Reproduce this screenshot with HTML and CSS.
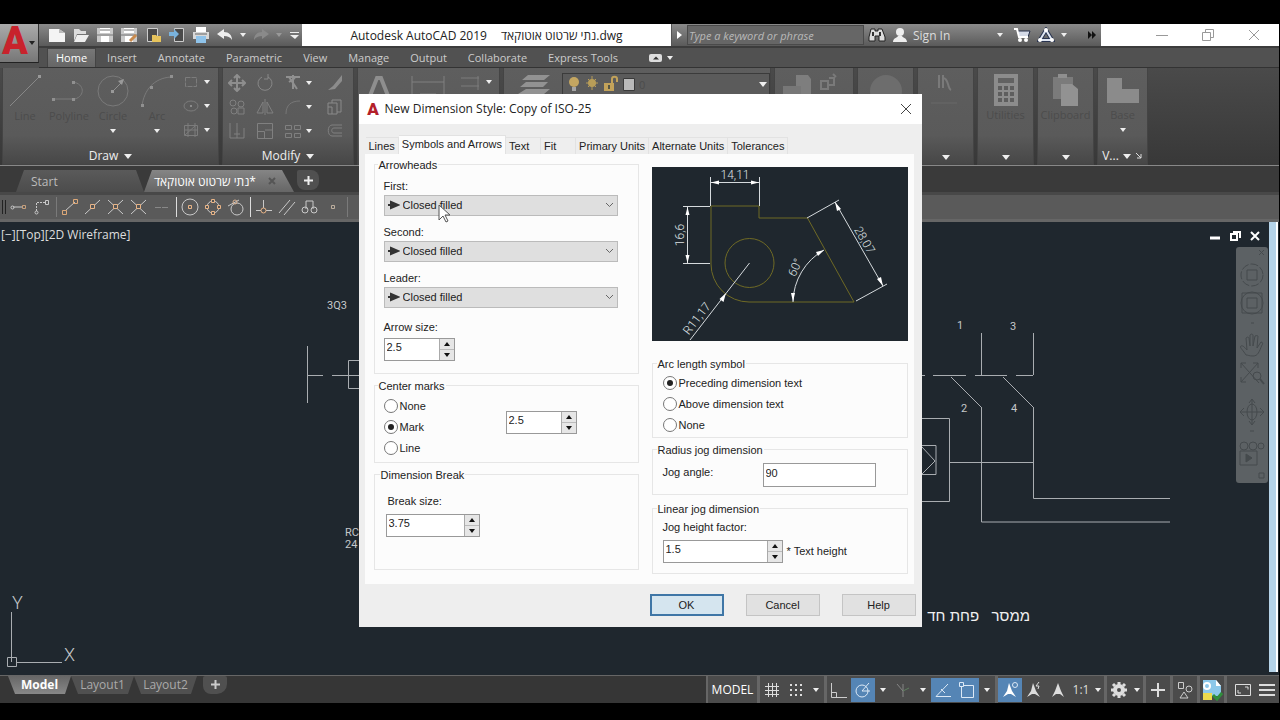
FILE: index.html
```html
<!DOCTYPE html>
<html lang="en">
<head>
  <meta charset="UTF-8">
  <meta name="viewport" content="width=device-width, initial-scale=1.0">
  <title>Autodesk AutoCAD 2019</title>
  <link rel="stylesheet" href="styles.css">
</head>
<body>
  <div class="app">
    <header class="header">
      <button class="app-btn" aria-label="Application menu">
        <svg width="28" height="36" viewBox="0 0 28 36"><text x="14" y="29" class="logo-a">A</text></svg>
        <i class="caret dark"></i>
      </button>

      <div class="titlebar">
        <div class="quick">
          <button aria-label="New"><svg width="18" height="16"><path d="M1 2h10l6 4v9H1z" fill="#f4f4f4"/><path d="M11 2v4h6z" fill="#bbb"/></svg></button>
          <button aria-label="Open"><svg width="18" height="16"><path d="M2 2h5l2 2h5v3H5L2 14z" fill="#ddd"/><path d="M5 8h12l-4 7H2z" fill="#eee"/></svg></button>
          <button aria-label="Save"><svg width="18" height="16"><path d="M1 1h16v14H1z" fill="#c9c9c9"/><path d="M4 1h10v5H4zM5 9h8v6H5z" fill="#fff"/><path d="M4 3h10M1 8h16" stroke="#777"/></svg></button>
          <button aria-label="Save As"><svg width="18" height="16"><path d="M1 1h16v14H1z" fill="#c9c9c9"/><path d="M4 1h10v5H4zM5 9h8v6H5z" fill="#fff"/><path d="M4 3h10M1 8h16" stroke="#777"/><path d="M10 14l6-6" stroke="#c98a4c" stroke-width="3"/></svg></button>
          <button aria-label="Open from Web"><svg width="18" height="16"><path d="M3.500 1.500h10v13h-10z" fill="#4a4a4a" stroke="#ccc"/><path d="M8 8h4l1 1h4v6H8z" fill="#e6c35c"/></svg></button>
          <button aria-label="Save to Web"><svg width="18" height="16"><path d="M6.500 1.500h9v13h-9z" fill="#4a4a4a" stroke="#ccc"/><path d="M1 5h5V2l5 5-5 5V9H1z" fill="#79b2dc"/></svg></button>
          <button aria-label="Plot"><svg width="18" height="16"><path d="M4 0h10v5H4z" fill="#fff"/><path d="M1 5h16v7H1z" fill="#d8d8d8"/><path d="M4 9h10v7H4z" fill="#8fc3ea"/><path d="M3 7h12" stroke="#666"/></svg></button>
          <button aria-label="Undo"><svg width="18" height="16"><path d="M1 7l7-5v3c5 0 8 3 8 8-2-3-4-4-8-4v3z" fill="#eee"/></svg></button>
          <i class="caret"></i>
          <button aria-label="Redo"><svg width="18" height="16"><path d="M17 7l-7-5v3c-5 0-8 3-8 8 2-3 4-4 8-4v3z" fill="#8a8a8a"/></svg></button>
          <i class="caret dim"></i>
          <button class="more" aria-label="Customize"><svg width="12" height="16"><path d="M2 5.500h9" stroke="#eee"/><path d="M2 8h9l-4 4z" fill="#eee"/></svg></button>
        </div>
        <div class="doc-title"><span>Autodesk AutoCAD 2019</span><span>נתי שרטוט אוטוקאד.dwg</span></div>
        <button class="search-toggle" aria-label="Toggle search"><svg width="8" height="10"><path d="M1 1l5 4-5 4z" fill="#fff"/></svg></button>
        <input class="search" type="text" aria-label="Search" placeholder="Type a keyword or phrase">
        <div class="account">
          <button aria-label="Find"><svg width="18" height="16"><path d="M3 2h4v2h3V2h4l3 8v4h-6V9H7v5H1v-4z" fill="#ddd" stroke="#222"/><path d="M5 5v4M12 5v4" stroke="#333" stroke-width="2"/></svg></button>
          <button class="sign"><svg width="16" height="16"><circle cx="8" cy="5" r="4" fill="#eee"/><path d="M1 15c0-4 4-4 5-6h4c1 2 5 2 5 6z" fill="#eee"/></svg>Sign In</button>
          <i class="caret push"></i>
          <button aria-label="App Store"><svg width="18" height="16"><path d="M1 2h3l2 8h9l2-6H5" fill="#d5dbe8" stroke="#27304a"/><path d="M1 2h3l2 8h9" fill="none" stroke="#fff" stroke-width="2"/><circle cx="7" cy="13" r="2" fill="#fff"/><circle cx="13" cy="13" r="2" fill="#fff"/></svg></button>
          <button aria-label="Autodesk 360"><svg width="18" height="16"><path d="M9 3l6 10H3z" fill="none" stroke="#28334f" stroke-width="4"/><path d="M9 3l6 10H3z" fill="none" stroke="#dfe6f2" stroke-width="2"/><circle cx="9" cy="3" r="2" fill="#fff"/><circle cx="3" cy="13" r="2" fill="#fff"/><circle cx="15" cy="13" r="2" fill="#fff"/></svg></button>
          <i class="caret"></i>
          <button class="ff" aria-label="More"><svg width="10" height="10"><path d="M1 1l4 4-4 4zM5 1l4 4-4 4z" fill="#111"/></svg></button>
        </div>
        <div class="win-btns">
          <button aria-label="Minimize"><svg width="12" height="12"><path d="M0 6.500h12" stroke="#999"/></svg></button>
          <button aria-label="Restore"><svg width="12" height="12" fill="none" stroke="#999"><path d="M.500 3.500h8v8h-8zM3.500 3V.500h8v8H9"/></svg></button>
          <button aria-label="Close"><svg width="12" height="12" stroke="#999"><path d="M1 1l10 10M11 1L1 11"/></svg></button>
        </div>
      </div>

      <nav class="menubar">
        <a href="#" class="active">Home</a>
        <a href="#">Insert</a>
        <a href="#">Annotate</a>
        <a href="#">Parametric</a>
        <a href="#">View</a>
        <a href="#">Manage</a>
        <a href="#">Output</a>
        <a href="#">Collaborate</a>
        <a href="#">Express Tools</a>
        <button class="ribbon-min" aria-label="Minimize ribbon"><svg width="14" height="8"><rect width="13" height="8" rx="2" fill="#ddd"/><path d="M4 5.500l3-3 3 3z" fill="#333"/></svg><i class="caret"></i></button>
      </nav>
    </header>

    <div class="ribbon">
      <section class="panel draw">
        <div class="tools">
          <button class="big"><svg width="34" height="34"><path d="M2 32L32 2" stroke="#888"/><path d="M30 1h3v3h-3z" fill="#999"/></svg>Line</button>
          <button class="big"><svg width="40" height="34"><path d="M4 25h22M24 8c12 2 12 14 2 17" fill="none" stroke="#7a7a7a"/><path d="M3 24h3v3H3zM23 24h3v3h-3zM23 7h3v3h-3z" fill="#909090"/></svg>Polyline</button>
          <button class="big"><svg width="34" height="34"><circle cx="17" cy="17" r="15" fill="none" stroke="#7a7a7a"/><path d="M17 17L27 7" stroke="#909090"/><path d="M28 5l-2 6-4-4zM15 16h3v3h-3z" fill="#999"/></svg>Circle<i class="caret"></i></button>
          <button class="big"><svg width="34" height="34"><path d="M2 32C4 16 14 4 31 3" fill="none" stroke="#7a7a7a"/><path d="M1 30h3v3H1zM10 12h3v3h-3zM30 1h3v3h-3z" fill="#909090"/></svg>Arc<i class="caret"></i></button>
          <div class="small-grid">
            <button aria-label="Rectangle"><svg width="16" height="16"><path d="M2.500 3.500h11v9h-11z" fill="none" stroke="#7c7c7c" stroke-dasharray="5 1"/></svg><i class="caret"></i></button>
            <button aria-label="Ellipse"><svg width="16" height="16"><ellipse cx="8" cy="8" rx="7" ry="5" fill="none" stroke="#7c7c7c"/><path d="M7 7h2v2H7z" fill="#8c8c8c"/></svg><i class="caret"></i></button>
            <button aria-label="Hatch"><svg width="16" height="16"><path d="M1.500 3.500h13v10h-13zM5 1v14M12 1v14M1 8h14M2 13L12 4" fill="none" stroke="#7c7c7c"/></svg><i class="caret"></i></button>
          </div>
        </div>
        <h2>Draw <i class="caret"></i></h2>
      </section>

      <section class="panel modify">
        <div class="tools mod-grid">
          <button aria-label="Move"><svg width="18" height="18"><path d="M9 1v16M1 9h16M6 4l3-3 3 3M6 14l3 3 3-3M4 6L1 9l3 3M14 6l3 3-3 3" fill="none" stroke="#8e8e8e" stroke-width="2"/></svg></button>
          <button aria-label="Rotate"><svg width="18" height="18"><path d="M12 3a7 7 0 1 1-6 0M12 0v5h-4" fill="none" stroke="#888"/></svg></button>
          <button aria-label="Trim"><svg width="18" height="18"><path d="M2 3h14M5 3l8 12M9 1v14M5 8l6-4" fill="none" stroke="#909090" stroke-width="2"/></svg><i class="caret"></i></button>
          <button aria-label="Erase"><svg width="18" height="18"><path d="M16 1L7 12l-5 4 7-1 7-8z" fill="#8c8c8c"/></svg></button>
          <button aria-label="Copy"><svg width="18" height="18" fill="none" stroke="#808080"><circle cx="5" cy="5" r="3"/><circle cx="13" cy="6" r="3"/><circle cx="6" cy="13" r="3"/><path d="M10 10h6v6h-6z"/></svg></button>
          <button aria-label="Mirror"><svg width="18" height="18" fill="none" stroke="#808080"><path d="M9 1v16M7 4v11H1zM11 4v11h6z"/></svg></button>
          <button aria-label="Fillet"><svg width="18" height="18"><path d="M2 16C2 7 7 3 16 3" fill="none" stroke="#777"/></svg><i class="caret"></i></button>
          <button aria-label="Explode"><svg width="18" height="18" fill="none" stroke="#8a8a8a"><path d="M2 5h9v11H2zM6 5V2h9v12h-4M2 9h4v7"/></svg></button>
          <button aria-label="Stretch"><svg width="18" height="18" fill="none" stroke="#808080"><path d="M2 1v15h14V6M9 1v15M6 12h6"/></svg></button>
          <button aria-label="Scale"><svg width="18" height="18" fill="none" stroke="#808080"><path d="M1.500 1.500h15v15h-15zM1.500 9.500h7v7M9 8h7"/></svg></button>
          <button aria-label="Array"><svg width="18" height="18" fill="none" stroke="#808080"><path d="M1.500 3.500h6v4h-6zM10.500 3.500h6v4h-6zM1.500 11.500h6v4h-6zM10.500 11.500h6v4h-6z"/></svg><i class="caret"></i></button>
          <button aria-label="Offset"><svg width="18" height="18" fill="none" stroke="#808080"><path d="M16 3H6C1 3 1 14 6 14h10M16 6H8c-3 0-3 5 0 5h8"/></svg></button>
        </div>
        <h2>Modify <i class="caret"></i></h2>
      </section>

      <section class="panel annotation">
        <div class="tools">
          <svg width="34" height="34"><path d="M4 32L15 4h4l11 28M9 22h16" fill="none" stroke="#8e8e8e" stroke-width="4"/></svg>
          <svg width="36" height="34"><path d="M2 2v30M34 2v30M2 8h32M10 20h16M18 20v14" fill="none" stroke="#808080"/></svg>
          <svg width="20" height="34"><path d="M1 4h18M1 12h18M18 2v14" fill="none" stroke="#7c7c7c"/></svg>
          <i class="caret"></i>
        </div>
      </section>

      <section class="panel layers">
        <svg width="34" height="34"><path d="M10 2h22l-6 5H4zM8 9h22l-5 5H2zM8 16h24l-6 5H0z" fill="#929292"/></svg>
        <button class="layer-combo" aria-label="Layer">
          <svg width="14" height="18"><circle cx="7" cy="7" r="5" fill="#c4a661"/><path d="M5 12h4v4H5z" fill="#a5a5a5"/></svg>
          <svg width="14" height="18"><circle cx="7" cy="8" r="4" fill="#b89d58"/><path d="M7 1v14M1 8h12M3 4l8 8M11 4l-8 8" stroke="#b89d58"/></svg>
          <svg width="16" height="18"><path d="M1 8h10v8H1z" fill="#c2a25a"/><path d="M9 8V4c0-3 5-3 5 0v3" fill="none" stroke="#c2a25a" stroke-width="2"/><path d="M6 10v4" stroke="#554" stroke-width="2"/></svg>
          <svg width="12" height="18"><path d="M.500 3.500h11v12h-11z" fill="#b9b9b9" stroke="#3a3a3a"/></svg>
          <span>0</span>
          <i class="caret"></i>
        </button>
      </section>

      <section class="panel block">
        <svg width="28" height="34"><path d="M13 2h12l3 4v16H13z" fill="#7e7e7e"/><path d="M0 13h18v12H0z" fill="#777"/></svg>
        <svg width="18" height="20"><path d="M2 8h7v8H2zM10 5h5v7h-5M14 1l3 3" fill="none" stroke="#7a7a7a" stroke-width="2"/></svg>
      </section>

      <section class="panel slim"><svg width="34" height="34"><circle cx="17" cy="18" r="16" fill="#6d6d6d"/></svg></section>
      <section class="panel slim">
        <svg width="34" height="34"><path d="M10 2v13M14 2v13M14 5c6 0 4 10 8 12" fill="none" stroke="#7a7a7a" stroke-width="2"/><path d="M2 30h26" stroke="#686868"/></svg>
        <i class="caret foot"></i>
      </section>
      <section class="panel slim">
        <svg width="34" height="34"><path d="M5 1h24v32H5z" fill="#8c8c8c"/><path d="M9 5h16v5H9z" fill="#626262"/><path d="M9 15h16M9 21h16M9 27h16" stroke="#5e5e5e" stroke-width="4" stroke-dasharray="4 2"/></svg>
        <span>Utilities</span>
        <i class="caret foot"></i>
      </section>
      <section class="panel slim">
        <svg width="34" height="34"><path d="M4 4h20v22H4z" fill="#7b7b7b"/><path d="M9 1h9v4H9z" fill="#8f8f8f"/><path d="M12 11h11l6 5v17H12z" fill="#929292"/></svg>
        <span>Clipboard</span>
        <i class="caret foot"></i>
      </section>
      <section class="panel slim view">
        <svg width="34" height="34"><path d="M1 5h15v11h17v14H1z" fill="#8b8b8b"/></svg>
        <span>Base</span>
        <i class="caret"></i>
        <h2>V... <i class="caret"></i><svg width="8" height="8"><path d="M1 1l5 5M6 2v4H2" fill="none" stroke="#ddd"/></svg></h2>
      </section>
    </div>

    <div class="file-tabs">
      <button class="file-tab">Start</button>
      <button class="file-tab current"><span dir="rtl">*נתי שרטוט אוטוקאד</span><svg width="8" height="8"><path d="M1 1l6 6M7 1L1 7" stroke="#555" stroke-width="2"/></svg></button>
      <button class="file-add" aria-label="New tab"><svg width="9" height="9"><path d="M4.500 0v9M0 4.500h9" stroke="#eee" stroke-width="2"/></svg></button>
    </div>

    <div class="snapbar">
      <i class="grip"></i>
      <button aria-label="Temporary track point"><svg width="20" height="20" fill="none" stroke="#c9c9c9"><path d="M4 10h9"/><circle cx="3.500" cy="10.500" r="1.500"/><path d="M13.500 8.500h3v3h-3z" stroke="#c7a07c"/></svg></button>
      <button aria-label="Snap from"><svg width="20" height="20" fill="none" stroke="#c9c9c9"><path d="M4.500 14V5.500h9" stroke-dasharray="2 1"/><circle cx="4.500" cy="15.500" r="1.500"/><path d="M13.500 3.500h3v4h-3z"/></svg></button>
      <i class="sep faint"></i>
      <button aria-label="Endpoint"><svg width="20" height="20" fill="none" stroke="#c9c9c9"><path d="M5 14L15 5"/><path d="M2.500 13.500h4v4h-4zM13.500 2.500h4v4h-4z" stroke="#dda878"/></svg></button>
      <button aria-label="Midpoint"><svg width="20" height="20" fill="none" stroke="#c9c9c9"><path d="M2 17L17 3"/><path d="M7.500 7.500h4v4h-4z" stroke="#e8b487" fill="#555"/></svg></button>
      <button aria-label="Intersection"><svg width="20" height="20" fill="none" stroke="#c9c9c9"><path d="M2 17L17 3M2 3l15 14"/><path d="M7.500 7.500h4v4h-4z" stroke="#e8b487" fill="#555"/></svg></button>
      <button aria-label="Apparent intersection"><svg width="20" height="20" fill="none" stroke="#c9c9c9"><path d="M2 17L17 3M2 3l15 14"/><path d="M7.500 7.500h4v4h-4z" stroke="#e8b487" fill="#555"/></svg></button>
      <button aria-label="Extension"><svg width="20" height="20"><path d="M3 10.500h14" stroke="#888" stroke-dasharray="6 1"/></svg></button>
      <i class="sep"></i>
      <button aria-label="Center"><svg width="20" height="20" fill="none" stroke="#c9c9c9"><circle cx="10" cy="10" r="8"/><path d="M8.500 8.500h3v3h-3z" stroke="#e8b487"/></svg></button>
      <button aria-label="Quadrant"><svg width="20" height="20" fill="none" stroke="#c9c9c9"><circle cx="10" cy="10" r="6"/><path d="M8.500 2.500h3v3h-3zM8.500 14.500h3v3h-3zM2.500 8.500h3v3h-3zM14.500 8.500h3v3h-3z" stroke="#e8b487" fill="#555"/></svg></button>
      <button aria-label="Tangent"><svg width="20" height="20" fill="none" stroke="#c9c9c9"><circle cx="11" cy="12" r="6"/><path d="M2 9l11-6"/><circle cx="9" cy="5" r="2" stroke="#d8b090"/></svg></button>
      <i class="sep"></i>
      <button aria-label="Perpendicular"><svg width="20" height="20" fill="none" stroke="#c9c9c9"><path d="M2 13.500h16M9.500 3v8"/><circle cx="9.500" cy="13.500" r="2.500" stroke="#e8b487" fill="#555"/></svg></button>
      <button aria-label="Parallel"><svg width="20" height="20" fill="none" stroke="#c9c9c9"><path d="M2 16L13 3M7 18L18 5"/></svg></button>
      <button aria-label="Insert snap"><svg width="20" height="20" fill="none" stroke="#c9c9c9"><path d="M6 12V4h7v8"/><circle cx="5" cy="13" r="3"/><circle cx="14" cy="13" r="3"/></svg></button>
      <button aria-label="Node"><svg width="20" height="20" fill="none"><path d="M8.500 8.500h3v3h-3z" stroke="#bcae9e"/></svg></button>
      <i class="sep faint"></i>
    </div>

    <main class="canvas">
      <svg class="drawing" width="100%" height="100%">
        <!-- left side of the circuit -->
        <text x="327" y="87">3Q3</text>
        <path d="M307.500 124v57M307 153.500h16M332 153.500h40M372 138.500h-23.500v28H372"/>
        <text x="345" y="314">RC</text>
        <text x="345" y="326">24</text>
        <!-- contacts and relay on the right -->
        <text x="957" y="107">1</text>
        <text x="1010" y="108">3</text>
        <text x="961" y="190">2</text>
        <text x="1011" y="190">4</text>
        <path d="M981.500 111v42M1033.500 111v42M920 153.500h5M933 153.500h33M975 153.500h32M1016 153.500h17M951 155l30 30M1003 155l30 30"/>
        <path d="M981.500 185v115H1170M1033.500 185v91.500H1170M900 196.500h49.500v83H900M950 240.500h83M900 223.500h36v29h-36M922 225l13 14-13 13"/>
        <text class="heb" x="1030" y="399" direction="rtl" xml:space="preserve">ממסר   פחת חד</text>
        <!-- UCS icon -->
        <path d="M11.500 390v50M17 440.500h45M7.500 435.500h9v9h-9z" stroke="#e0e0e0"/>
        <text class="axis" x="12" y="387">Y</text>
        <text class="axis" x="64" y="439">X</text>
      </svg>
      <div class="viewport-label">[−][Top][2D Wireframe]</div>
      <div class="view-btns">
        <button aria-label="Minimize view"><svg width="12" height="12"><path d="M1 8h10" stroke="#fff" stroke-width="3"/></svg></button>
        <button aria-label="Restore view"><svg width="12" height="12" fill="none" stroke="#fff" stroke-width="2"><path d="M2 4h6v6H2zM4 2h7v6"/></svg></button>
        <button aria-label="Close view"><svg width="12" height="12"><path d="M2 2l8 8M10 2l-8 8" stroke="#fff" stroke-width="2"/></svg></button>
      </div>
      <div class="navbar">
        <svg width="32" height="236" fill="none" stroke="#454a4d">
          <path d="M23 3l5 5M28 3l-5 5"/>
          <circle cx="16" cy="28" r="11" stroke-dasharray="8 2"/><path d="M11 23h10v10H11z"/>
          <path d="M6 46h20v20H6zM11 51h10v10H11z"/><circle cx="16" cy="56" r="11"/>
          <path d="M15 76h3"/>
          <path d="M10 108c-3-5-7-8-5-9s4 2 6 4l-1-12c2-2 3 0 3 0l1 8V88c2-2 3 0 3 0v11l2-10c2-1 3 0 3 0l-1 12 4-6c2 0 2 2 1 3-3 7-4 11-9 11-4 0-5-1-7-1z"/>
          <path d="M5 116l18 20M22 116L5 135M5 121v-5h5M17 116h5v5M5 130v5h5"/><circle cx="21" cy="129" r="4"/><path d="M24 132l4 5" stroke-width="2"/>
          <path d="M16 153v24M4 165h24M8 161l-4 4 4 4M24 161l4 4-4 4M13 156l3-4 3 4M13 174l3 4 3-4"/><ellipse cx="16" cy="165" rx="5" ry="8"/>
          <path d="M14 184h4"/>
          <circle cx="8" cy="199" r="4"/><circle cx="17" cy="199" r="4"/><circle cx="25" cy="199" r="3"/><path d="M4 204h17v14H4z"/><path d="M10 207l6 4-6 4z" fill="#454a4d"/>
          <path d="M23 226h5v5h-5z"/>
        </svg>
      </div>
      <div class="scroll-strip"></div>
    </main>

    <footer class="footer">
      <div class="layout-tabs">
        <button class="layout-tab active">Model</button>
        <button class="layout-tab">Layout1</button>
        <button class="layout-tab">Layout2</button>
        <button class="layout-tab add" aria-label="New layout"><svg width="9" height="9"><path d="M4.500 0v9M0 4.500h9" stroke="#ccc" stroke-width="2"/></svg></button>
      </div>
      <div class="status">
        <div class="grp"><button class="model">MODEL</button></div>
        <div class="grp">
          <button aria-label="Grid"><svg width="18" height="18" stroke="#ddd"><path d="M5.500 2v14M9.500 2v14M13.500 2v14M2 5.500h14M2 9.500h14M2 13.500h14"/></svg></button>
          <button aria-label="Snap"><svg width="18" height="18"><path d="M3 4h12M3 9h12M3 14h12" stroke="#ddd" stroke-width="2" stroke-dasharray="2 3"/></svg></button>
          <i class="caret"></i>
        </div>
        <div class="grp">
          <button aria-label="Ortho"><svg width="18" height="18" fill="none" stroke="#ccc"><path d="M1.500 2v14.500H17M1.500 11.500h5v5"/></svg></button>
          <button class="on" aria-label="Polar"><svg width="18" height="18" fill="none" stroke="#dce9f6"><circle cx="8" cy="10" r="6"/><path d="M8 10l7-8M8 10h8"/></svg></button>
          <i class="caret"></i>
          <button aria-label="Isometric"><svg width="18" height="18" fill="none" stroke="#858585"><path d="M9 3v13M3 3l6 7" /><path d="M9 10l6-3" stroke="#5f7f5f"/></svg></button>
          <i class="caret"></i>
          <button class="on" aria-label="Object snap tracking"><svg width="18" height="18" fill="none" stroke="#dce9f6"><path d="M14 3L2 15.500h15M7 8l4 4"/></svg></button>
          <button class="on" aria-label="Object snap"><svg width="18" height="18" fill="none" stroke="#dce9f6"><path d="M3.500 6v10.500h12v-12H6"/><path d="M1.500 1.500h4v4h-4z"/></svg></button>
          <i class="caret"></i>
        </div>
        <div class="grp">
          <button class="on" aria-label="Annotation visibility"><svg width="18" height="18"><path d="M8 2l3 8 4 6-5-3H7l-5 3 4-6z" fill="#fff"/><circle cx="14" cy="4" r="2.500" fill="none" stroke="#dce9f6"/></svg></button>
          <button aria-label="Auto scale"><svg width="18" height="18"><path d="M8 2l3 8 4 6-5-3H7l-5 3 4-6z" fill="#ddd"/><path d="M14 1l-3 4h3l-1 3" fill="none" stroke="#ddd"/></svg></button>
          <button aria-label="Annotation scale icon"><svg width="18" height="18"><path d="M9 2l3 8 3 6-4-3H7l-4 3 3-6z" fill="#ddd"/></svg></button>
          <button class="scale">1:1 <i class="caret"></i></button>
        </div>
        <div class="grp tight">
          <button aria-label="Workspace"><svg width="18" height="18"><circle cx="9" cy="9" r="4" fill="none" stroke="#ddd" stroke-width="4"/><path d="M9 1v3M9 14v3M1 9h3M14 9h3M3 3l2 2M13 13l2 2M15 3l-2 2M3 15l2-2" stroke="#ddd" stroke-width="3"/></svg></button>
          <i class="caret"></i>
        </div>
        <div class="grp"><button aria-label="Annotation monitor"><svg width="18" height="18"><path d="M9 2v14M2 9h14" stroke="#ddd" stroke-width="2"/></svg></button></div>
        <div class="grp"><button aria-label="Isolate objects"><svg width="18" height="18" fill="none" stroke="#ccc"><path d="M2.500 1.500h5v6h-5zM8 11l4 6H4z"/><circle cx="13" cy="8" r="3"/></svg></button></div>
        <div class="grp"><button aria-label="Graphics performance"><svg width="22" height="22"><path d="M2 1h13l5 6v10H2z" fill="#8cc8ea"/><path d="M15 1v6h5z" fill="#fff"/><path d="M2 14h9v7H2z" fill="#ecd94c"/><circle cx="6" cy="7" r="3" fill="none" stroke="#fff" stroke-width="2"/><path d="M12 16l4 4 5-6" fill="none" stroke="#2f8f3c" stroke-width="3"/></svg></button></div>
        <div class="grp last">
          <button aria-label="Clean screen"><svg width="18" height="18" fill="none" stroke="#ddd"><path d="M1.500 3.500h15v11h-15zM4 9v3h3M14 8.500V6h-3"/></svg></button>
          <button aria-label="Customization"><svg width="18" height="18"><path d="M1 4h16M1 9h16M1 14h16" stroke="#ddd" stroke-width="2"/></svg></button>
        </div>
      </div>
    </footer>
  </div>

  <div class="overlay">
    <form class="dialog" role="dialog" aria-labelledby="dlg-title">
      <div class="dlg-title">
        <svg width="16" height="20" viewBox="0 0 16 20"><text x="7" y="16" class="logo-small">A</text></svg>
        <h1 id="dlg-title">New Dimension Style: Copy of ISO-25</h1>
        <button type="button" aria-label="Close dialog"><svg width="12" height="12"><path d="M1 1l10 10M11 1L1 11" stroke="#444"/></svg></button>
      </div>
      <div class="dlg-tabs" role="tablist">
        <button type="button" role="tab">Lines</button>
        <button type="button" role="tab" class="selected">Symbols and Arrows</button>
        <button type="button" role="tab">Text</button>
        <button type="button" role="tab">Fit</button>
        <button type="button" role="tab">Primary Units</button>
        <button type="button" role="tab">Alternate Units</button>
        <button type="button" role="tab">Tolerances</button>
      </div>

      <div class="page">
        <div class="col">
          <fieldset class="arrowheads">
            <legend>Arrowheads</legend>
            <div class="field">
              <label for="first">First:</label>
              <div class="combo">
                <select id="first"><option>Closed filled</option></select>
                <svg class="arrow" width="12" height="10"><path d="M0 5h2M3 2l7 3-7 3z" fill="#333" stroke="#333" stroke-width="2"/></svg>
                <svg class="chev" width="9" height="6"><path d="M1 1l3.500 3.500L8 1" fill="none" stroke="#666"/></svg>
                <svg class="cursor" width="13" height="20"><path d="M1 1v15l4-4 3 6 2-1-3-6h5z" fill="#fff" stroke="#555"/></svg>
              </div>
            </div>
            <div class="field">
              <label for="second">Second:</label>
              <div class="combo">
                <select id="second"><option>Closed filled</option></select>
                <svg class="arrow" width="12" height="10"><path d="M0 5h2M3 2l7 3-7 3z" fill="#333" stroke="#333" stroke-width="2"/></svg>
                <svg class="chev" width="9" height="6"><path d="M1 1l3.500 3.500L8 1" fill="none" stroke="#666"/></svg>
              </div>
            </div>
            <div class="field">
              <label for="leader">Leader:</label>
              <div class="combo">
                <select id="leader"><option>Closed filled</option></select>
                <svg class="arrow" width="12" height="10"><path d="M0 5h2M3 2l7 3-7 3z" fill="#333" stroke="#333" stroke-width="2"/></svg>
                <svg class="chev" width="9" height="6"><path d="M1 1l3.500 3.500L8 1" fill="none" stroke="#666"/></svg>
              </div>
            </div>
            <div class="field numeric">
              <label for="arrow-size">Arrow size:</label>
              <div class="spin short">
                <input type="text" id="arrow-size" value="2.5">
                <div class="steps"><button type="button" class="up" aria-label="Increase"></button><button type="button" class="down" aria-label="Decrease"></button></div>
              </div>
            </div>
          </fieldset>

          <fieldset class="center-marks">
            <legend>Center marks</legend>
            <div class="radios">
              <label><input type="radio" name="center">None</label>
              <label><input type="radio" name="center" checked>Mark</label>
              <label><input type="radio" name="center">Line</label>
            </div>
            <div class="spin short">
              <input type="text" aria-label="Center mark size" value="2.5">
              <div class="steps"><button type="button" class="up" aria-label="Increase"></button><button type="button" class="down" aria-label="Decrease"></button></div>
            </div>
          </fieldset>

          <fieldset class="break">
            <legend>Dimension Break</legend>
            <div class="field numeric">
              <label for="break-size">Break size:</label>
              <div class="spin mid">
                <input type="text" id="break-size" value="3.75">
                <div class="steps"><button type="button" class="up" aria-label="Increase"></button><button type="button" class="down" aria-label="Decrease"></button></div>
              </div>
            </div>
          </fieldset>
        </div>

        <div class="col right">
          <svg class="preview" viewBox="0 0 256 174">
            <g fill="none" stroke="#6f6a25">
              <path d="M59 39h48v12h48.500L202 135H97A38 38 0 0 1 59 97z"/>
              <circle cx="97.500" cy="96" r="24.500"/>
            </g>
            <g fill="none" stroke="#d5dadd">
              <path d="M58.500 10v29M107.500 10v29M59 15.500h48M31 39.500h27M31 96.500h27M35.500 39v57"/>
              <path d="M97.500 96L38 173M155 51l32-18M204 134l31-17M183 35l48 84M141 135A61 61 0 0 1 172 83"/>
            </g>
            <g fill="#fff">
              <path d="M59 15.500l8-2v4zM107 15.500l-8-2v4zM35.500 40l-2 8h4zM35.500 96l-2-8h4z"/>
              <path d="M74 126l-2.500 9-4-3zM183 35l6 7-4 2zM231 119l-6-7 4-2zM141 135l-2-9h4zM172 83l-8 2 2 4z"/>
            </g>
            <g class="dims">
              <text x="83" y="12">14,11</text>
              <text transform="translate(32 68) rotate(-90)">16,6</text>
              <text transform="translate(48 154) rotate(-52)">R11,17</text>
              <text transform="translate(147 102) rotate(-66)">60°</text>
              <text transform="translate(209 75) rotate(60)">28,07</text>
            </g>
          </svg>

          <fieldset class="arc">
            <legend>Arc length symbol</legend>
            <div class="radios">
              <label><input type="radio" name="arc" checked>Preceding dimension text</label>
              <label><input type="radio" name="arc">Above dimension text</label>
              <label><input type="radio" name="arc">None</label>
            </div>
          </fieldset>

          <fieldset class="radius">
            <legend>Radius jog dimension</legend>
            <label for="jog-angle">Jog angle:</label>
            <input type="text" id="jog-angle" value="90">
          </fieldset>

          <fieldset class="linear">
            <legend>Linear jog dimension</legend>
            <label for="jog-height">Jog height factor:</label>
            <div class="spin-row">
              <div class="spin long">
                <input type="text" id="jog-height" value="1.5">
                <div class="steps"><button type="button" class="up" aria-label="Increase"></button><button type="button" class="down" aria-label="Decrease"></button></div>
              </div>
              <span>* Text height</span>
            </div>
          </fieldset>
        </div>
      </div>

      <div class="dlg-footer">
        <button type="button" class="btn primary">OK</button>
        <button type="button" class="btn">Cancel</button>
        <button type="button" class="btn">Help</button>
      </div>
    </form>
  </div>
</body>
</html>
```
FILE: styles.css
```css
* {
  box-sizing: border-box;
}
body {
  margin: 0;
  background-color: #000;
  font-family: "Open Sans", "Noto Sans", "Liberation Sans", sans-serif;
  font-size: 12px;
  color: #ddd;
}
button {
  font: inherit;
  color: inherit;
  background: none;
  border: none;
  padding: 0;
}
svg {
  flex: none;
}
h1, h2 {
  margin: 0;
  font-size: 12px;
  font-weight: normal;
}
.app {
  display: flex;
  flex-direction: column;
  min-height: 100vh;
  padding: 24px 1px 17px 0;
}
.caret {
  flex: none;
  width: 0;
  height: 0;
  border: 3px solid transparent;
  border-top: 4px solid #eee;
  border-bottom: none;
}
.caret.dark {
  border-top-color: #222;
}
.caret.dim {
  border-top-color: #999;
}

/* title bar and menu */
.header {
  display: grid;
  grid-template-columns: 39px 1fr;
  grid-template-rows: 24px 20px;
  background-color: #515151;
}
.app-btn {
  grid-row: 1 / 3;
  height: 39px;
  display: flex;
  align-items: center;
  padding-left: 1px;
  background: linear-gradient(#aaa, #777);
  border-right: 1px solid #333;
  border-bottom: 1px solid #222;
}
.logo-a {
  font: 900 38px/38px Roboto, sans-serif;
  fill: #c8232c;
  text-anchor: middle;
}
.app-btn svg,
.dlg-title svg {
  overflow: visible;
}
.titlebar {
  display: flex;
  background: linear-gradient(#8a8a8a, #5a5a5a);
  border-bottom: 2px solid #3c3c3c;
}
.titlebar button {
  display: flex;
  align-items: center;
  justify-content: center;
}
.quick {
  display: flex;
  align-items: center;
  gap: 6px;
  width: 263px;
  padding-left: 9px;
}
.quick .more {
  margin-left: auto;
  margin-right: 4px;
}
.doc-title {
  flex: 1;
  display: flex;
  align-items: center;
  justify-content: center;
  gap: 14px;
  background-color: #fff;
  color: #222;
  white-space: nowrap;
}
.search-toggle {
  width: 16px;
  border-left: 1px solid #555;
}
.search {
  width: 177px;
  margin: 1px 0;
  padding: 0 1px;
  border: 1px solid #4a4a4a;
  background-color: #666;
  font: italic 11px "Open Sans", sans-serif;
  color: #ddd;
}
.search::placeholder {
  color: #b9b9b9;
}
.account {
  display: flex;
  align-items: center;
  gap: 6px;
  width: 237px;
  padding: 0 0 0 4px;
}
.account .sign {
  gap: 5px;
}
.account .push {
  margin-left: auto;
  margin-right: 4px;
}
.account .ff {
  width: 18px;
  margin-left: 10px;
}
.win-btns {
  display: flex;
  width: 178px;
  padding-left: 38px;
  background-color: #fff;
}
.win-btns button {
  width: 46px;
}
.menubar {
  display: flex;
  align-items: center;
  gap: 1px;
  padding-left: 8px;
  border-bottom: 1px solid #333;
  font-size: 11px;
}
.menubar a {
  padding: 0 10px;
  line-height: 18px;
  color: #ccc;
  text-decoration: none;
  white-space: nowrap;
}
.menubar a.active {
  padding: 0 8px;
  background: linear-gradient(#777, #666);
  border: 1px solid #444;
  border-bottom: none;
  color: #fff;
}
.ribbon-min {
  display: flex;
  align-items: center;
  gap: 4px;
  margin-left: 20px;
}

/* ribbon */
.ribbon {
  display: flex;
  gap: 3px;
  height: 98px;
  padding: 0 2px;
  background: linear-gradient(#4a4a4a, #383838);
  border-bottom: 1px solid #888;
}
.panel {
  display: flex;
  flex: none;
  flex-direction: column;
  background: linear-gradient(#5e5e5e, #5a5a5a 70%, #474747);
  border: 1px solid #444;
  border-top: none;
  color: #4c4c4c;
  font-size: 11px;
}
.panel h2 {
  display: flex;
  align-items: center;
  justify-content: center;
  gap: 6px;
  margin-top: auto;
  line-height: 16px;
  color: #eee;
}
.panel h2 .caret {
  border-width: 5px 4px 0;
}
.tools {
  display: flex;
  padding-top: 6px;
}
.draw {
  width: 217px;
}
.modify {
  width: 132px;
}
.big {
  display: flex;
  flex-direction: column;
  align-items: center;
  width: 44px;
  height: 74px;
  line-height: 16px;
}
.big .caret {
  margin-top: 5px;
}
.small-grid {
  display: flex;
  flex-direction: column;
  gap: 8px;
  margin-left: 4px;
}
.small-grid button {
  display: flex;
  align-items: center;
  gap: 5px;
}
.mod-grid {
  display: grid;
  grid-template-columns: 28px 28px 42px 20px;
  gap: 6px 0;
  padding-left: 5px;
}
.mod-grid button {
  display: flex;
  align-items: center;
  gap: 4px;
}
.annotation {
  width: 143px;
}
.annotation .tools {
  gap: 14px;
  padding-left: 4px;
}
.annotation .caret {
  margin-top: 6px;
  margin-left: -8px;
}
.layers {
  flex-direction: row;
  gap: 10px;
  width: 268px;
  padding: 5px 0 0 14px;
}
.layer-combo {
  display: flex;
  flex: 1;
  align-items: center;
  gap: 4px;
  height: 22px;
  padding: 0 2px 0 4px;
  border: 1px solid #3b3b3b;
  background-color: #5b5b5b;
}
.layer-combo .caret {
  margin-left: auto;
  border-width: 5px 4px 0;
}
.block {
  flex-direction: row;
  gap: 8px;
  width: 80px;
  padding: 5px 8px;
}
.slim {
  align-items: center;
  width: 57px;
  padding-top: 5px;
}
.slim span {
  line-height: 16px;
}
.slim .foot {
  margin-top: auto;
  margin-bottom: 4px;
  border-width: 5px 4px 0;
}
.view {
  width: 51px;
}
.view > .caret {
  margin-top: 5px;
}
.view h2 {
  gap: 4px;
}

/* drawing tabs */
.file-tabs {
  display: flex;
  align-items: end;
  height: 26px;
  padding-left: 16px;
  background-color: #3a3a3a;
}
.file-tab {
  width: 128px;
  height: 22px;
  padding-left: 15px;
  text-align: left;
  background: linear-gradient(#5a5a5a, #4c4c4c);
  border-radius: 8px 8px 0 0;
  clip-path: polygon(8px 0, 120px 0, 100% 100%, 0 100%);
  color: #bbb;
}
.file-tab.current {
  display: flex;
  align-items: center;
  gap: 12px;
  width: 150px;
  padding-left: 10px;
  background: linear-gradient(#858585, #666);
  clip-path: polygon(8px 0, 138px 0, 100% 100%, 0 100%);
  color: #fff;
  white-space: nowrap;
}
.file-add {
  display: flex;
  align-items: center;
  justify-content: center;
  width: 22px;
  height: 20px;
  margin: 0 0 2px 3px;
  background-color: #505050;
  border-radius: 2px 8px 8px 8px;
}

/* object snap toolbar */
.snapbar {
  display: flex;
  align-items: center;
  gap: 3px;
  height: 30px;
  background-color: #5a5a5a;
  border-top: 3px solid #484848;
  border-bottom: 3px solid #666;
}
.snapbar button {
  display: flex;
}
.grip {
  width: 4px;
  height: 14px;
  margin-left: 2px;
  border: solid #222;
  border-width: 0 1px;
}
.sep {
  width: 1px;
  height: 20px;
  margin-left: 1px;
  background-color: #ddd;
}
.sep.faint {
  background-color: #7a7a7a;
}

/* model space */
.canvas {
  position: relative;
  flex: 1;
  min-height: 300px;
  background-color: #1f272e;
}
.drawing {
  position: absolute;
  inset: 0;
}
.drawing path {
  fill: none;
  stroke: #a9adb1;
}
.drawing text {
  font: 11px Roboto, sans-serif;
  fill: #c5c8ca;
}
.drawing .heb {
  font: 15px "Liberation Sans", sans-serif;
  fill: #f0f0f0;
}
.drawing .axis {
  font: 300 18px Roboto, sans-serif;
}
.viewport-label {
  position: absolute;
  top: 4px;
  left: 1px;
  line-height: 18px;
}
.view-btns {
  position: absolute;
  top: 7px;
  right: 18px;
  display: flex;
  gap: 8px;
}
.navbar {
  position: absolute;
  top: 25px;
  right: 11px;
  width: 32px;
  height: 236px;
  background-color: #5c6164;
  border-radius: 3px;
}
.scroll-strip {
  position: absolute;
  top: 0;
  right: 1px;
  bottom: 3px;
  width: 9px;
  background-color: #b5d3e8;
  border-right: 2px solid #fff;
}

/* layout tabs and status bar */
.footer {
  display: flex;
  height: 28px;
  background-color: #363636;
  border-top: 1px solid #666;
}
.layout-tabs {
  display: flex;
  flex: 1;
  padding-left: 8px;
}
.layout-tab {
  width: 63px;
  height: 18px;
  line-height: 18px;
  background-color: #505050;
  clip-path: polygon(0 0, 100% 0, 57px 100%, 7px 100%);
  color: #aaa;
}
.layout-tab.active {
  background: linear-gradient(#666, #888);
  color: #fff;
  font-weight: bold;
}
.layout-tab.add {
  width: 24px;
  margin-left: 6px;
  clip-path: none;
  border-radius: 2px 2px 10px 8px;
}
.status {
  display: flex;
  background-color: #4b4b4b;
  border-left: 2px solid #666;
}
.grp {
  display: flex;
  align-items: center;
  border-right: 3px solid #666;
}
.grp button {
  display: flex;
  align-items: center;
  justify-content: center;
  width: 24px;
  height: 24px;
}
.grp button.model {
  width: 49px;
  color: #fff;
}
.grp button.scale {
  width: 34px;
  gap: 6px;
}
.grp > .caret {
  margin: 0 5px;
}
.grp.tight > .caret {
  margin: 0 3px;
}
.grp .on {
  background-color: #5585b5;
}
.grp.last {
  border-right: none;
  padding-left: 4px;
}

/* dimension style dialog */
.overlay {
  position: fixed;
  inset: 0;
  display: grid;
  place-items: center;
}
.dialog {
  width: 563px;
  background-color: #eee;
  font: 11px/14px "Liberation Sans", Arial, sans-serif;
  color: #222;
}
.dlg-title {
  display: flex;
  align-items: center;
  gap: 3px;
  height: 30px;
  padding: 0 10px 0 7px;
  background-color: #fff;
}
.dlg-title h1 {
  flex: 1;
  font-family: "Open Sans", sans-serif;
}
.dlg-title button {
  display: flex;
}
.logo-small {
  font: 900 17px/17px Roboto, sans-serif;
  fill: #b3202a;
  text-anchor: middle;
}
.dlg-tabs {
  display: flex;
  align-items: end;
  height: 30px;
  padding-left: 7px;
}
.dlg-tabs button {
  height: 17px;
  padding: 0 3px;
  border: solid #e2e2e2;
  border-width: 1px 1px 0 0;
  text-align: left;
  white-space: nowrap;
}
.dlg-tabs button:nth-child(3),
.dlg-tabs button:nth-child(4) {
  width: 35px;
}
.dlg-tabs .selected {
  height: 19px;
  padding-bottom: 2px;
  background-color: #fcfcfc;
}
.page {
  display: grid;
  grid-template-columns: 265px 1fr;
  gap: 13px;
  margin: 0 8px 0 6px;
  padding: 5px 6px 10px 9px;
  background-color: #fcfcfc;
}
.col {
  display: flex;
  flex-direction: column;
  gap: 6px;
}
fieldset {
  margin: 0;
  padding: 0;
  border: 1px solid #e6e6e6;
}
legend {
  margin-left: -6px;
  padding: 0 1px;
  line-height: 12px;
}
.arrowheads {
  padding: 8px 20px 12px 9px;
}
.field {
  display: flex;
  flex-direction: column;
  gap: 2px;
  margin-bottom: 9px;
}
.field.numeric {
  gap: 4px;
  margin: 12px 0 0;
}
.combo {
  position: relative;
}
.combo select {
  display: block;
  width: 100%;
  height: 21px;
  padding: 0 18px;
  appearance: none;
  border: 1px solid #bbb;
  border-radius: 0;
  background-color: #dfdfdf;
  font: inherit;
  color: #222;
}
.combo .arrow {
  position: absolute;
  top: 5px;
  left: 4px;
}
.combo .chev {
  position: absolute;
  top: 7px;
  right: 4px;
}
.combo .cursor {
  position: absolute;
  top: 9px;
  left: 54px;
  z-index: 1;
}
.spin {
  display: flex;
  height: 23px;
  border: 1px solid #999;
  background-color: #fff;
}
.spin.short {
  width: 71px;
}
.spin.mid {
  width: 94px;
}
.spin.long {
  width: 120px;
}
.spin input {
  flex: 1;
  min-width: 0;
  padding: 0 2px 4px;
  border: none;
  background: none;
  font: inherit;
  color: #222;
}
.steps {
  display: flex;
  flex-direction: column;
  width: 15px;
  background-color: #e6e6e6;
  border-left: 1px solid #aaa;
}
.steps button {
  display: grid;
  flex: 1;
  place-items: center;
}
.steps .down {
  border-top: 1px solid #bbb;
}
.steps button::after {
  content: "";
  border: 3px solid transparent;
}
.steps .up::after {
  border-top: none;
  border-bottom: 4px solid #111;
}
.steps .down::after {
  border-bottom: none;
  border-top: 4px solid #111;
}
.center-marks {
  display: grid;
  grid-template-columns: 122px auto;
  justify-content: start;
  padding: 7px 0 7px 9px;
}
.center-marks .spin {
  margin-top: 12px;
}
.radios {
  display: flex;
  flex-direction: column;
  gap: 7px;
}
.radios label {
  display: flex;
  align-items: center;
  gap: 2px;
}
.radios input {
  display: grid;
  place-items: center;
  width: 14px;
  height: 14px;
  margin: 0;
  appearance: none;
  border: 1px solid #777;
  border-radius: 50%;
  background-color: #fff;
}
.radios input:checked::after {
  content: "";
  width: 6px;
  height: 6px;
  border-radius: 50%;
  background-color: #222;
}
.break {
  padding: 0 0 32px 11px;
}
.break label {
  padding: 1px 0 2px 2px;
}
.col.right {
  padding-top: 8px;
}
.preview {
  display: block;
  width: 256px;
  margin-bottom: 11px;
  background-color: #1f272e;
}
.dims {
  font: 300 12px Roboto, sans-serif;
  fill: #dfe3e5;
  text-anchor: middle;
}
.arc {
  padding: 6px 0 5px 10px;
}
.radius {
  display: flex;
  padding: 7px 31px 7px 10px;
  justify-content: space-between;
}
.radius label {
  padding-top: 2px;
}
.radius input {
  width: 113px;
  height: 24px;
  padding: 0 2px 4px;
  border: 1px solid #999;
  background-color: #fff;
  font: inherit;
  color: #222;
}
.linear {
  margin-top: 2px;
  padding: 5px 0 10px 10px;
}
.linear > label {
  display: block;
  margin-bottom: 6px;
}
.spin-row {
  display: flex;
  align-items: center;
  gap: 4px;
}
.dlg-footer {
  display: flex;
  justify-content: end;
  gap: 22px;
  padding: 10px 6px 11px;
}
.btn {
  width: 74px;
  height: 22px;
  background-color: #e1e1e1;
  border: 1px solid #c4c4c4;
}
.btn.primary {
  background-color: #d5e5ef;
  border: 2px solid #3f76a6;
}
```
